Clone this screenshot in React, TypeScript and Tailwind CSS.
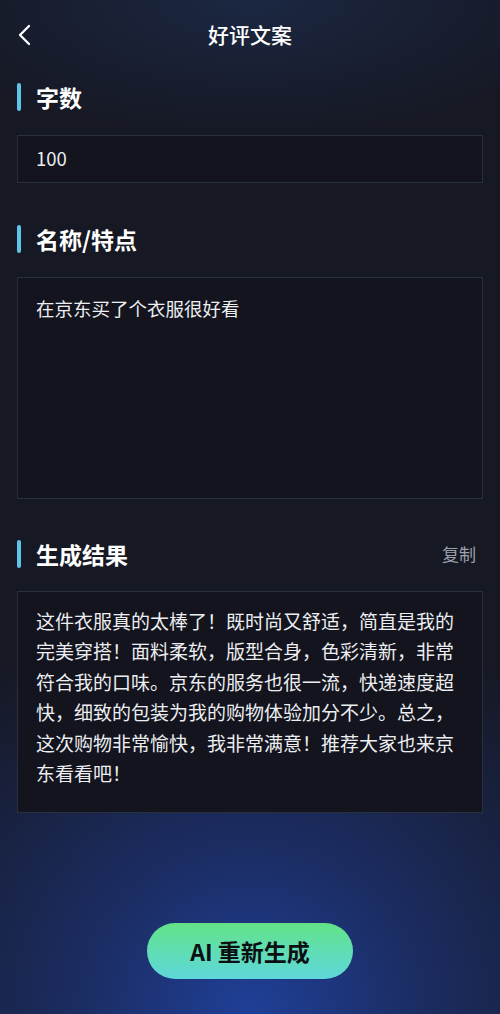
const font = "font-['Noto_Sans_CJK_SC','Noto_Sans',sans-serif]";

function SectionTitle({ title, action }: { title: string; action?: string }) {
  return (
    <div className="flex h-[28px] items-center justify-between">
      <div className="flex items-center gap-[15px]">
        <span className="h-[28px] w-[4px] rounded-full bg-[#5fc3ea]" />
        <h2 className="text-[23px] font-bold leading-none text-white">{title}</h2>
      </div>
      {action && <button className="pr-[7px] text-[17px] text-[#9ca0aa]">{action}</button>}
    </div>
  );
}

export default function App() {
  const result =
    "这件衣服真的太棒了！既时尚又舒适，简直是我的完美穿搭！面料柔软，版型合身，色彩清新，非常符合我的口味。京东的服务也很一流，快递速度超快，细致的包装为我的购物体验加分不少。总之，这次购物非常愉快，我非常满意！推荐大家也来京东看看吧！";

  return (
    <div
      className={`${font} flex h-[1014px] w-full flex-col bg-[#161823] bg-[radial-gradient(ellipse_85%_42%_at_50%_100%,#1f3f98_0%,rgba(31,58,140,0.6)_40%,rgba(22,24,35,0)_100%),radial-gradient(ellipse_70%_14%_at_50%_0%,#1b2742_0%,rgba(22,24,35,0)_100%)] px-[17px]`}
    >
      <header className="relative flex h-[70px] items-center justify-center">
        <svg
          className="absolute left-[0px] top-[24px]"
          width="14"
          height="22"
          viewBox="0 0 14 22"
          fill="none"
          stroke="white"
          strokeWidth="2.3"
          strokeLinecap="round"
          strokeLinejoin="round"
        >
          <path d="M12 2 L3 11 L12 20" />
        </svg>
        <h1 className="text-[21px] font-medium text-white">好评文案</h1>
      </header>

      <div className="mt-[13px]">
        <SectionTitle title="字数" />
      </div>
      <div className="mt-[24px] flex h-[48px] items-center border border-[#27303c] bg-[#13141d] px-[18px] text-[18.5px] text-[#eceef2]">
        100
      </div>

      <div className="mt-[42px]">
        <SectionTitle title="名称/特点" />
      </div>
      <div className="mt-[24px] h-[222px] border border-[#27303c] bg-[#13141d] px-[18px] pt-[15px] text-[18.5px] leading-[30px] text-[#eceef2]">
        在京东买了个衣服很好看
      </div>

      <div className="mt-[41px]">
        <SectionTitle title="生成结果" action="复制" />
      </div>
      <div className="mt-[23px] h-[222px] border border-[#27303c] bg-[#13141d] pl-[18px] pr-[10px] pt-[14px] text-[19px] leading-[30.4px] text-[#eceef2]">
        {result}
      </div>

      <div className="mt-[110px] flex justify-center">
        <button className="h-[56px] w-[206px] rounded-full bg-gradient-to-b from-[#63e286] to-[#5fd7da] text-[23px] font-bold text-[#0b0f14]">
          AI 重新生成
        </button>
      </div>
    </div>
  );
}
